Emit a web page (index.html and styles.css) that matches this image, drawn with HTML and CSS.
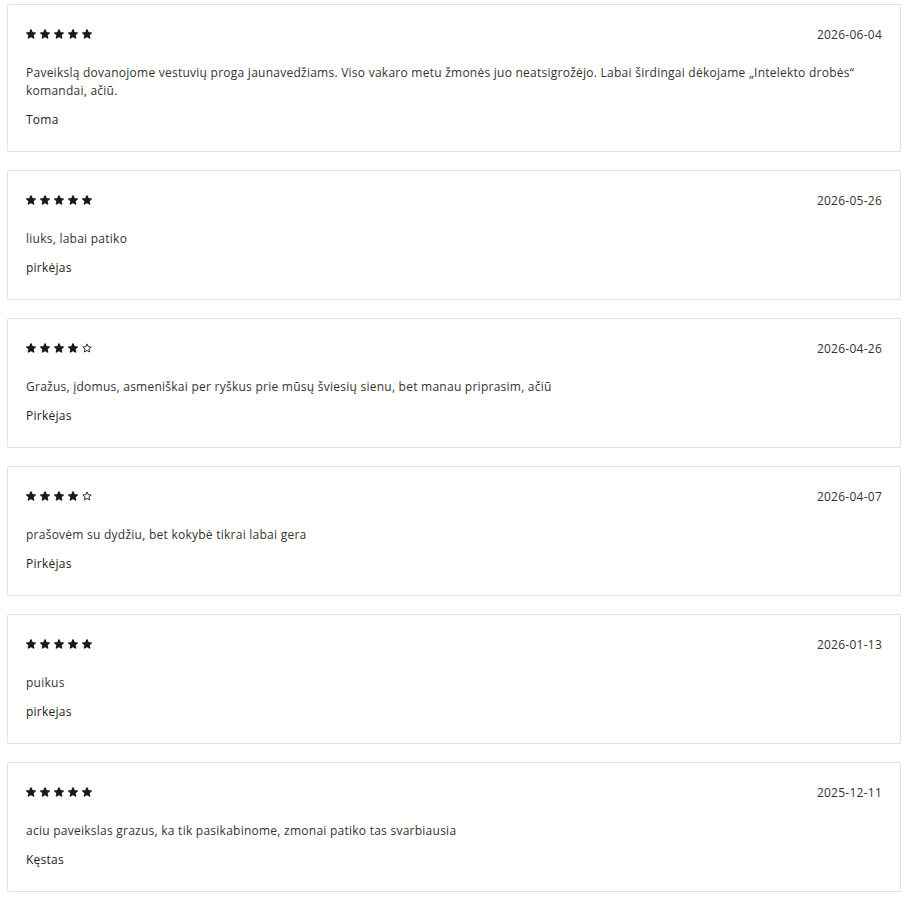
FILE: index.html
```html
<!DOCTYPE html>
<html lang="lt">
<head>
<meta charset="utf-8">
<title>Atsiliepimai</title>
<link rel="stylesheet" href="styles.css">
</head>
<body>
<svg width="0" height="0" class="defs">
  <defs>
    <path id="star" d="M5 0.9 L6.2 3.7 L9.2 4 L6.9 6 L7.6 9 L5 7.5 L2.4 9 L3.1 6 L0.8 4 L3.8 3.7 Z"/>
  </defs>
</svg>
<div class="reviews">
  <div class="review">
    <div class="review-head">
      <div class="stars">
        <svg class="star full" viewBox="0 0 10 10"><use href="#star"/></svg>
        <svg class="star full" viewBox="0 0 10 10"><use href="#star"/></svg>
        <svg class="star full" viewBox="0 0 10 10"><use href="#star"/></svg>
        <svg class="star full" viewBox="0 0 10 10"><use href="#star"/></svg>
        <svg class="star full" viewBox="0 0 10 10"><use href="#star"/></svg>
      </div>
      <div class="date">2026-06-04</div>
    </div>
    <p class="text">Paveikslą dovanojome vestuvių proga jaunavedžiams. Viso vakaro metu žmonės juo neatsigrožėjo. Labai širdingai dėkojame „Intelekto drobės“ komandai, ačiū.</p>
    <div class="author">Toma</div>
  </div>

  <div class="review">
    <div class="review-head">
      <div class="stars">
        <svg class="star full" viewBox="0 0 10 10"><use href="#star"/></svg>
        <svg class="star full" viewBox="0 0 10 10"><use href="#star"/></svg>
        <svg class="star full" viewBox="0 0 10 10"><use href="#star"/></svg>
        <svg class="star full" viewBox="0 0 10 10"><use href="#star"/></svg>
        <svg class="star full" viewBox="0 0 10 10"><use href="#star"/></svg>
      </div>
      <div class="date">2026-05-26</div>
    </div>
    <p class="text">liuks, labai patiko</p>
    <div class="author">pirkėjas</div>
  </div>

  <div class="review">
    <div class="review-head">
      <div class="stars">
        <svg class="star full" viewBox="0 0 10 10"><use href="#star"/></svg>
        <svg class="star full" viewBox="0 0 10 10"><use href="#star"/></svg>
        <svg class="star full" viewBox="0 0 10 10"><use href="#star"/></svg>
        <svg class="star full" viewBox="0 0 10 10"><use href="#star"/></svg>
        <svg class="star empty" viewBox="0 0 10 10"><use href="#star"/></svg>
      </div>
      <div class="date">2026-04-26</div>
    </div>
    <p class="text">Gražus, įdomus, asmeniškai per ryškus prie mūsų šviesių sienu, bet manau priprasim, ačiū</p>
    <div class="author">Pirkėjas</div>
  </div>

  <div class="review">
    <div class="review-head">
      <div class="stars">
        <svg class="star full" viewBox="0 0 10 10"><use href="#star"/></svg>
        <svg class="star full" viewBox="0 0 10 10"><use href="#star"/></svg>
        <svg class="star full" viewBox="0 0 10 10"><use href="#star"/></svg>
        <svg class="star full" viewBox="0 0 10 10"><use href="#star"/></svg>
        <svg class="star empty" viewBox="0 0 10 10"><use href="#star"/></svg>
      </div>
      <div class="date">2026-04-07</div>
    </div>
    <p class="text">prašovėm su dydžiu, bet kokybė tikrai labai gera</p>
    <div class="author">Pirkėjas</div>
  </div>

  <div class="review">
    <div class="review-head">
      <div class="stars">
        <svg class="star full" viewBox="0 0 10 10"><use href="#star"/></svg>
        <svg class="star full" viewBox="0 0 10 10"><use href="#star"/></svg>
        <svg class="star full" viewBox="0 0 10 10"><use href="#star"/></svg>
        <svg class="star full" viewBox="0 0 10 10"><use href="#star"/></svg>
        <svg class="star full" viewBox="0 0 10 10"><use href="#star"/></svg>
      </div>
      <div class="date">2026-01-13</div>
    </div>
    <p class="text">puikus</p>
    <div class="author">pirkejas</div>
  </div>

  <div class="review">
    <div class="review-head">
      <div class="stars">
        <svg class="star full" viewBox="0 0 10 10"><use href="#star"/></svg>
        <svg class="star full" viewBox="0 0 10 10"><use href="#star"/></svg>
        <svg class="star full" viewBox="0 0 10 10"><use href="#star"/></svg>
        <svg class="star full" viewBox="0 0 10 10"><use href="#star"/></svg>
        <svg class="star full" viewBox="0 0 10 10"><use href="#star"/></svg>
      </div>
      <div class="date">2025-12-11</div>
    </div>
    <p class="text">aciu paveikslas grazus, ka tik pasikabinome, zmonai patiko tas svarbiausia</p>
    <div class="author">Kęstas</div>
  </div>
</div>
</body>
</html>
```
FILE: styles.css
```css
html, body {
  background: #ffffff;
}
body {
  margin: 4px 7px;
  font-family: "Open Sans", "DejaVu Sans", sans-serif;
  font-size: 12px;
  letter-spacing: 0.25px;
  color: #333333;
}
.defs {
  position: absolute;
  width: 0;
  height: 0;
}
.reviews {
  display: flex;
  flex-direction: column;
  gap: 18px;
}
.review {
  border: 1px solid #e2e2e2;
  border-radius: 2px;
  padding: 18px 18px 22px;
  box-shadow: 0 0 2px rgba(0,0,0,0.05);
}
.review-head {
  display: flex;
  justify-content: space-between;
  align-items: center;
  height: 22px;
}
.stars {
  display: flex;
  gap: 4px;
}
.star {
  width: 10px;
  height: 10px;
}
.star.full use {
  fill: #1a1a1a;
  stroke: #1a1a1a;
  stroke-width: 1.4;
  stroke-linejoin: round;
}
.star.empty use {
  fill: #ffffff;
  stroke: #1a1a1a;
  stroke-width: 0.9;
  stroke-linejoin: round;
}
.date {
  color: #333333;
}
.text {
  margin: 19px 0 0;
  line-height: 18px;
}
.author {
  margin-top: 11px;
  line-height: 18px;
  color: #222222;
}
```
